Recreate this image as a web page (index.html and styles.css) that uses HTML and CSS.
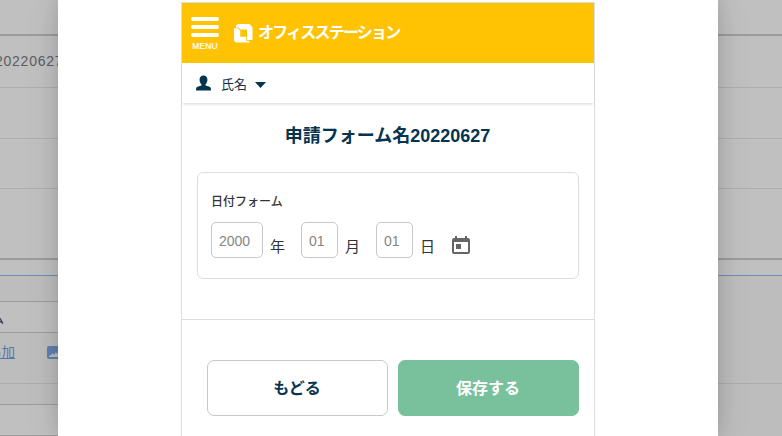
FILE: index.html
```html
<!DOCTYPE html>
<html lang="ja">
<head>
<meta charset="utf-8">
<title>申請フォーム</title>
<link rel="stylesheet" href="styles.css">
</head>
<body>
<div class="page">
  <div class="row row-head"></div>
  <div class="row row-name"><span class="form-code">20220627</span></div>
  <div class="row row-mid"></div>
  <div class="row row-short"></div>
  <div class="row row-last"></div>
  <div class="row row-gap"></div>
  <div class="editor">
    <div class="field"><span>ム</span></div>
    <div class="links">
      <a class="link">追加</a>
      <svg class="image-icon" viewBox="0 0 16 13"><path fill="#6080b0" fill-rule="evenodd" d="M2 0h12a2 2 0 0 1 2 2v9a2 2 0 0 1-2 2H2a2 2 0 0 1-2-2V2a2 2 0 0 1 2-2zM2 11h12V9l-2-3-2 2-1-2-2 3-1-2-2 2-2 1z"/></svg>
    </div>
    <div class="field field-last"></div>
  </div>
</div>

<div class="modal">
  <div class="phone">
    <header class="header">
      <div class="menu">
        <i class="bar"></i><i class="bar"></i><i class="bar"></i>
        <span class="menu-label">MENU</span>
      </div>
      <div class="brand">
        <svg class="logo" viewBox="0 0 19 19">
          <path fill="#fff" d="M4.500 0H15.500L18.500 3V16H13V5.500H6.500L4.500 3.500H2V2.500A2.500 2.500 0 0 1 4.500 0z"/>
          <path fill="#fff" d="M0 4.200H4L6.200 6.400V12.700H12.200V16.800H14.500L16 18.500H3a3 3 0 0 1-3-3z"/>
        </svg>
        <span class="brand-name">オフィスステーション</span>
      </div>
    </header>
    <div class="userbar">
      <svg class="person" viewBox="0 0 16 16"><path fill="#05344f" d="M8 0c2.700 0 4.200 1.800 4.200 4.500 0 2-.8 3.800-2 4.800v1.400l4.300 1.300c1 .4 1.500 1.400 1.500 4H0c0-2.600.5-3.600 1.500-4l4.300-1.300V9.300c-1.200-1-2-2.800-2-4.800C3.800 1.800 5.300 0 8 0z"/></svg>
      <span class="user-name">氏名</span>
      <svg class="caret" viewBox="0 0 11 6"><path fill="#05344f" d="M0 0h11L5.500 6z"/></svg>
    </div>
    <h1 class="title">申請フォーム名20220627</h1>
    <section class="card">
      <div class="label">日付フォーム</div>
      <div class="date">
        <span class="input year">2000</span><span class="unit">年</span>
        <span class="input">01</span><span class="unit">月</span>
        <span class="input">01</span><span class="unit">日</span>
        <svg class="calendar" viewBox="0 0 18 19"><path fill="#666" fill-rule="evenodd" d="M3 0h2v2h8V0h2v2h1a2 2 0 0 1 2 2v12a2 2 0 0 1-2 2H2a2 2 0 0 1-2-2V4a2 2 0 0 1 2-2h1zM2 6v10h14V6zM4 8h5v5H4z"/></svg>
      </div>
    </section>
    <footer class="actions">
      <div class="button back">もどる</div>
      <div class="button save">保存する</div>
    </footer>
  </div>
</div>
</body>
</html>
```
FILE: styles.css
```css
* { box-sizing: border-box; }
body {
  margin: 0;
  width: 782px;
  height: 436px;
  position: relative;
  overflow: hidden;
  background: #c0c0c0;
  font-family: "Liberation Sans", "Noto Sans CJK JP", sans-serif;
}
.page { height: 436px; overflow: hidden; }
.row { border-bottom: 1px solid #aeaeae; }
.row-head { height: 36px; border-bottom: 2px solid #9c9c9c; }
.row-name { height: 52px; padding-top: 16px; }
.form-code {
  display: block;
  margin-left: -5px;
  font-size: 14px;
  line-height: 18px;
  letter-spacing: .75px;
  color: #5c5c60;
}
.row-mid { height: 51px; }
.row-short { height: 50px; }
.row-last { height: 71px; border-bottom: 2px solid #9c9c9c; }
.row-gap { height: 16px; border-bottom-color: #6f8db8; }
.editor { height: 160px; padding-top: 25px; background: #bdbdbd; }
.field {
  width: 100px;
  height: 32px;
  border: 1px solid #9c9c9c;
  border-left: 0;
  background: #c0c0c0;
  color: #24242c;
  font-size: 13px;
  line-height: 33px;
}
.field span { margin-left: -9px; }
.links {
  height: 51px;
  margin-bottom: 20px;
  border-bottom: 1px solid #aeaeae;
  display: flex;
  align-items: flex-start;
  gap: 32px;
  padding-top: 10px;
}
.link {
  margin-left: -12px;
  color: #5577aa;
  font-size: 13.500px;
  line-height: 20px;
  text-decoration: underline;
}
.image-icon { width: 16px; height: 13px; margin-top: 3px; }

.modal {
  position: absolute;
  top: 0;
  left: 58px;
  width: 660px;
  height: 436px;
  padding: 2px 123px 0;
  background: #fff;
  box-shadow: 0 0 34px rgba(0, 0, 0, .11), 0 0 16px rgba(0, 0, 0, .12);
}
.phone { width: 414px; height: 434px; border: 1px solid #ddd; border-bottom: 0; }
.header {
  height: 60px;
  padding-left: 9px;
  display: flex;
  gap: 15px;
  background: #ffc304;
  color: #fff;
}
.menu {
  width: 28px;
  padding-top: 14px;
  display: flex;
  flex-direction: column;
  gap: 4px;
  align-items: center;
}
.bar { width: 28px; height: 4px; border-radius: 2px; background: #fff; }
.menu-label { margin-top: 1px; font-size: 8.500px; line-height: 9px; letter-spacing: .1px; white-space: nowrap; -webkit-text-stroke: .2px #fff; }
.brand { display: flex; align-items: center; gap: 5px; }
.logo { width: 19px; height: 19px; margin-top: 1px; }
.brand-name { font-size: 16px; font-weight: 700; line-height: 24px; letter-spacing: -1.800px; white-space: nowrap; }
.userbar {
  height: 40px;
  padding: 1px 0 0 14px;
  display: flex;
  align-items: center;
  box-shadow: 0 2px 3px -1px rgba(0, 0, 0, .16);
}
.person { width: 15px; height: 16px; margin-top: -2px; }
.user-name { margin: 2px 8px 0 10px; font-size: 13px; line-height: 20px; color: #17304c; }
.caret { width: 11px; height: 6px; margin-top: 2px; }
.title {
  margin: 19px 1px 22px 0;
  font-size: 18px;
  line-height: 28px;
  text-align: center;
  color: #05344f;
}
.card {
  height: 107px;
  margin: 0 15px;
  padding: 19px 13px 0;
  border: 1px solid #ddd;
  border-radius: 6px;
}
.label { height: 30px; font-size: 12px; font-weight: 500; line-height: 21px; color: #333; }
.date { display: flex; align-items: flex-start; }
.input {
  width: 37px;
  height: 36px;
  padding-left: 7px;
  border: 1px solid #c8c8c8;
  border-radius: 5px;
  font-size: 14px;
  line-height: 36px;
  color: #858585;
}
.year { width: 52px; }
.unit { width: 31px; margin-left: 7px; font-size: 15px; line-height: 20px; margin-top: 15px; color: #333; }
.calendar { width: 18px; height: 19px; margin: 14px 0 0 1px; }
.actions {
  margin-top: 40px;
  padding: 40px 15px 0 25px;
  border-top: 1px solid #ddd;
  display: flex;
  gap: 10px;
}
.button {
  width: 181px;
  height: 56px;
  padding-right: 1px;
  border: 1px solid #c8c8c8;
  border-radius: 7px;
  font-size: 16px;
  font-weight: 700;
  line-height: 55px;
  text-align: center;
  color: #05344f;
}
.save { border-color: #79c09c; background: #79c09c; color: #fff; }
```
